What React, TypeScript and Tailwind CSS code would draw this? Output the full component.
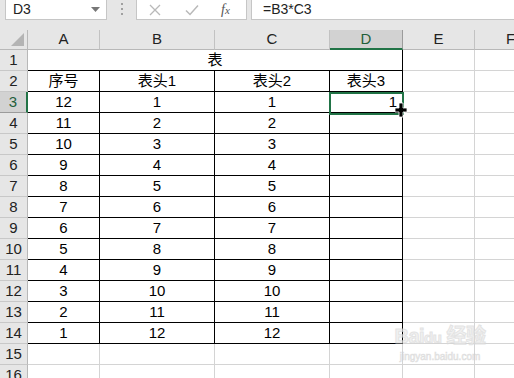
const FONT = '"Liberation Sans", "Noto Sans CJK SC", sans-serif'

const COLS = [
  { key: 'A', w: 'w-[72px]' },
  { key: 'B', w: 'w-[115px]' },
  { key: 'C', w: 'w-[115px]' },
  { key: 'D', w: 'w-[73px]' },
  { key: 'E', w: 'w-[72px]' },
  { key: 'F', w: 'w-[72px]' },
]

const BODY: string[][] = [
  ['序号', '表头1', '表头2', '表头3'],
  ...Array.from({ length: 12 }, (_, i) => [String(12 - i), String(i + 1), String(i + 1), i === 0 ? '1' : '']),
]

function Toolbar() {
  return (
    <div className="relative flex h-[30px] items-start bg-[#e6e6e6]">
      <div className="flex h-[20px] w-[102px] ml-[5px] items-center justify-between border border-t-0 border-[#c6c6c6] bg-white pl-[7px] pr-[6px]">
        <span className="text-[14px] text-[#222]">D3</span>
        <svg width="9" height="5" viewBox="0 0 9 5">
          <polygon points="0,0 9,0 4.5,5" fill="#777" />
        </svg>
      </div>
      <div className="ml-[14px] mt-[3px] flex flex-col gap-[3px]">
        <span className="block h-[2px] w-[2px] bg-[#a0a0a0]" />
        <span className="block h-[2px] w-[2px] bg-[#a0a0a0]" />
        <span className="block h-[2px] w-[2px] bg-[#a0a0a0]" />
      </div>
      <div className="ml-[13px] flex h-[20px] w-[111px] items-center border border-t-0 border-[#c6c6c6] bg-white">
        <svg className="ml-[12px]" width="12" height="12" viewBox="0 0 12 12">
          <path d="M1 1 L11 11 M11 1 L1 11" stroke="#b9b9b9" strokeWidth="1.3" />
        </svg>
        <svg className="ml-[24px]" width="14" height="12" viewBox="0 0 14 12">
          <path d="M1 6.5 L5 10.5 L13 1.5" stroke="#b9b9b9" strokeWidth="1.5" fill="none" />
        </svg>
        <span className="ml-[22px] text-[14px] italic text-[#555]" style={{ fontFamily: '"Liberation Serif", serif' }}>
          f<span className="text-[11px]">x</span>
        </span>
      </div>
      <div className="ml-[4px] flex h-[20px] flex-1 items-center border border-t-0 border-r-0 border-[#c6c6c6] bg-white pl-[11px]">
        <span className="text-[14px] text-[#222]">=B3*C3</span>
      </div>
    </div>
  )
}

function HeaderRow() {
  return (
    <div className="flex h-[20px]">
      <div className="relative h-[20px] w-[28px] shrink-0 border-r border-b border-[#b8b8b8] bg-[#e6e6e6]">
        <svg className="absolute right-[3px] bottom-[3px]" width="13" height="13" viewBox="0 0 13 13">
          <polygon points="13,0 13,13 0,13" fill="#b4b4b4" />
        </svg>
      </div>
      {COLS.map((c) => {
        const sel = c.key === 'D'
        return (
          <div
            key={c.key}
            className={`${c.w} h-[20px] shrink-0 flex items-center justify-center text-[15px] ${
              sel
                ? 'bg-[#d2d2d2] border-r border-[#9b9b9b] border-b-2 border-b-[#217346] text-[#1f5f3a]'
                : 'bg-[#e6e6e6] border-r border-[#c2c2c2] border-b border-b-[#b8b8b8] text-[#222]'
            }`}
          >
            {c.key}
          </div>
        )
      })}
    </div>
  )
}

function RowHead({ n }: { n: number }) {
  const sel = n === 3
  return (
    <div
      className={`h-[21px] w-[28px] shrink-0 flex items-center justify-center text-[15px] border-b ${
        sel
          ? 'bg-[#d2d2d2] border-r-2 border-r-[#217346] border-b-[#9b9b9b] text-[#1f5f3a]'
          : 'bg-[#e6e6e6] border-r border-r-[#b8b8b8] border-b-[#c8c8c8] text-[#222]'
      }`}
    >
      {n}
    </div>
  )
}

function Cell({ w, text, black, right }: { w: string; text?: string; black: boolean; right?: boolean }) {
  return (
    <div
      className={`${w} h-[21px] shrink-0 flex items-center text-[15px] text-black border-r border-b ${
        black ? 'border-black' : 'border-[#d4d4d4]'
      } ${right ? 'justify-end pr-[5px]' : 'justify-center'}`}
    >
      {text}
    </div>
  )
}

export default function App() {
  return (
    <div className="relative h-[378px] w-[514px] overflow-hidden bg-white" style={{ fontFamily: FONT }}>
      <Toolbar />
      <HeaderRow />
      <div className="flex">
        <RowHead n={1} />
        <div className="flex h-[21px] w-[375px] shrink-0 items-center justify-center border-r border-b border-black text-[15px] text-black">
          表
        </div>
        <Cell w="w-[72px]" black={false} />
        <Cell w="w-[72px]" black={false} />
      </div>
      {BODY.map((row, i) => (
        <div key={i} className="flex">
          <RowHead n={i + 2} />
          {row.map((t, j) => (
            <Cell key={j} w={COLS[j].w} text={t} black right={i === 1 && j === 3} />
          ))}
          <Cell w="w-[72px]" black={false} />
          <Cell w="w-[72px]" black={false} />
        </div>
      ))}
      {[15, 16].map((n) => (
        <div key={n} className="flex">
          <RowHead n={n} />
          {COLS.map((c) => (
            <Cell key={c.key} w={c.w} black={false} />
          ))}
        </div>
      ))}

      {/* selection box on D3 */}
      <div className="pointer-events-none absolute left-[329px] top-[92px] h-[23px] w-[75px] border-2 border-[#217346]" />
      <div className="absolute left-[400px] top-[111px] h-[5px] w-[5px] bg-[#217346] border border-white" />

      {/* cursor */}
      <svg className="absolute left-[394px] top-[102px]" width="14" height="16" viewBox="0 0 14 16">
        <path d="M5 1 H9 V6 H13 V10 H9 V15 H5 V10 H1 V6 H5 Z" fill="#000" stroke="#fff" strokeWidth="0.8" />
      </svg>

      {/* watermark */}
      <div className="pointer-events-none absolute left-[390px] top-[326px] w-[100px] text-center leading-none opacity-70">
        <div className="whitespace-nowrap text-[20px] font-bold tracking-tight text-[#ececec]" style={{ WebkitTextStroke: '1px #d8d8d8' }}>
          Bai<span className="text-[15px]">du</span> 经验
        </div>
        <div className="mt-[6px] whitespace-nowrap text-[10px] text-[#e2e2e2]" style={{ WebkitTextStroke: '0.5px #d0d0d0' }}>
          jingyan.baidu.com
        </div>
      </div>
    </div>
  )
}
